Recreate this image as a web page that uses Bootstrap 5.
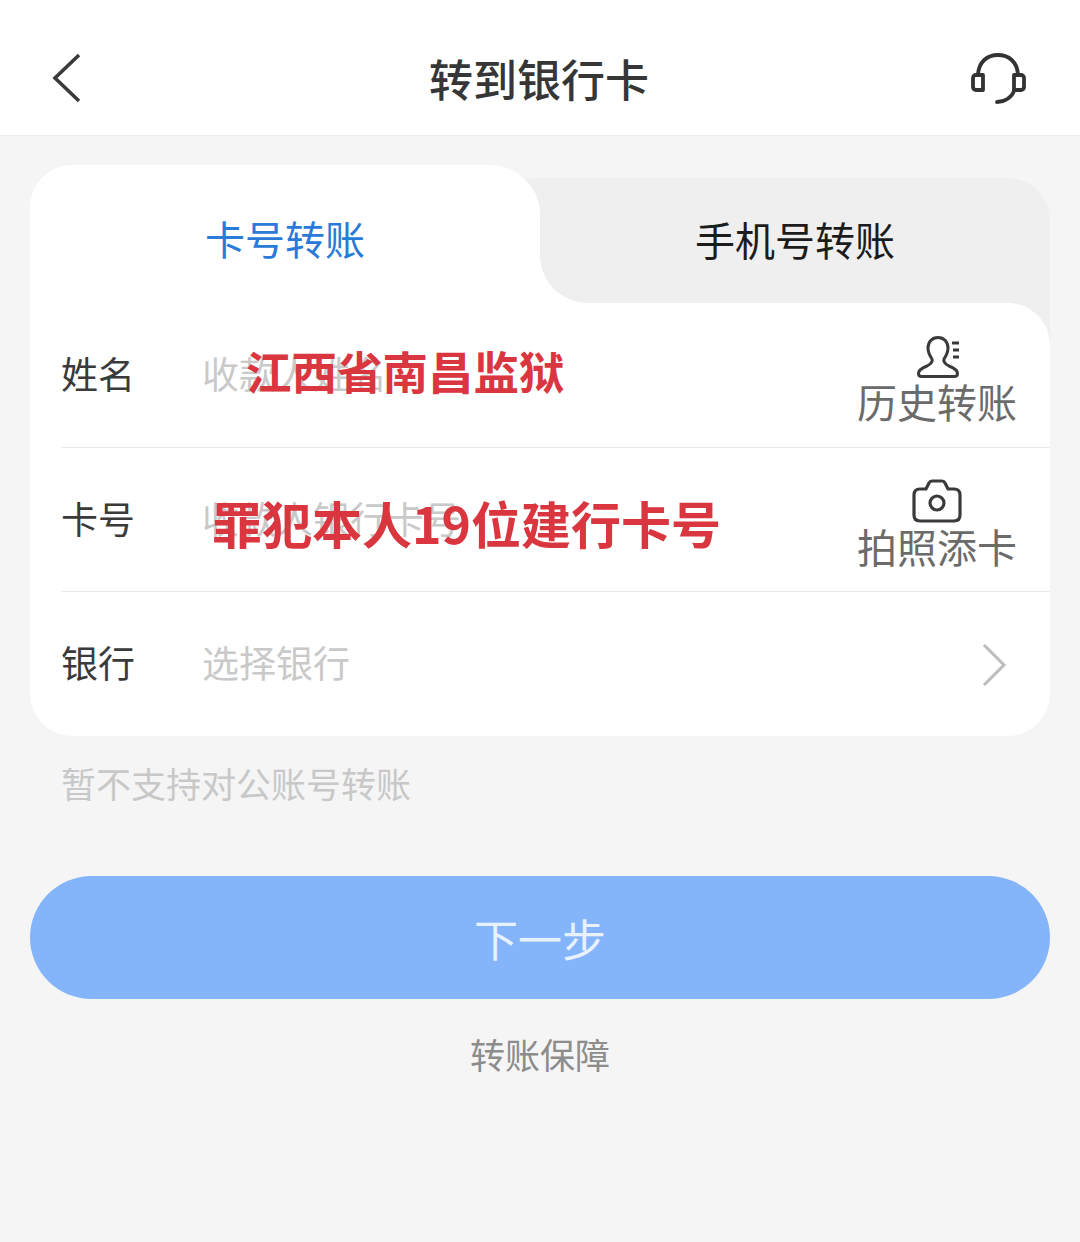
<!DOCTYPE html>
<html lang="zh">
<head>
<meta charset="utf-8">
<title>转到银行卡</title>
<link href="https://cdn.jsdelivr.net/npm/bootstrap@5.3.0/dist/css/bootstrap.min.css" rel="stylesheet">
<style>
html,body{height:100%}
body{background:#f5f5f5;font-family:"Noto Sans CJK SC","Liberation Sans",sans-serif;color:#333;overflow:hidden}
.top-bar{height:136px;background:#fff;border-bottom:1px solid #ececec;padding:20px 54px 0 52px}
.top-side{flex:0 0 120px}
.top-title{flex:1 1 0;text-align:center;font-size:44px;font-weight:500;color:#363636;line-height:1}
.sheet{margin:29px 30px 0}
.tab-row{display:flex;height:138px}
.tab-on{flex:0 0 510px;background:#fff;border-radius:42px 50px 0 0;color:#2a7ad8;font-size:40px;position:relative;z-index:1;padding-top:8px}
.tab-side{flex:1 1 0;margin-top:13px;margin-left:-50px;padding-left:50px;background:linear-gradient(#efefef 50%,#fff 50%) left top/100px 100% no-repeat}
.tab-off-in{height:100%;background:#efefef;border-radius:0 42px 0 48px;color:#1c1c1c;font-size:40px;display:flex;align-items:center;justify-content:center;padding-bottom:4px}
.form-back{background:#efefef;border-radius:0 0 42px 42px}
.form-sheet{background:#fff;border-radius:0 42px 42px 42px;padding-left:31px;height:433px}
.field{height:144px;position:relative}
.field+.field{border-top:1px solid #e9e9e9}
.field-label{flex:0 0 141px;font-size:37px;color:#3a3a3a;line-height:1;margin-bottom:3px}
.field-input{flex:1 1 0;border:0;padding:0;background:transparent;font-size:37px;line-height:1.2;color:#333;border-radius:0;box-shadow:none;margin-bottom:3px}
.field-input::placeholder{color:#c9c9c9;opacity:1}
.stamp{position:absolute;color:#d9363f;font-weight:700;line-height:1;white-space:nowrap}
.stamp-a{left:185px;top:45px;font-size:45.5px}
.stamp-b{left:151px;top:49px;font-size:50px}
.aside-act{flex:0 0 160px;margin-right:33px;text-align:center;color:#6b6b6b;font-size:40px;line-height:1}
.aside-act svg{display:block;margin:0 auto}
.act-one{margin-top:6px}
.act-one svg{transform:translateX(2px)}
.act-two{margin-top:4px}
.act-text{margin-top:2px}
.go-mark{margin:2px 43px 0 0}
.hint{font-size:35px;color:#c8c8c8;line-height:1;margin:29px 0 0 31px}
.next-btn{display:block;width:100%;height:123px;margin-top:76px;border:0;border-radius:62px;background:#84b5fb;color:#e8f1fe;font-size:44px;line-height:1}
.guard{font-size:35px;color:#8c8c8c;line-height:1;margin-top:37px;text-align:center}
</style>
</head>
<body>
<header class="top-bar d-flex align-items-center">
  <div class="top-side"><svg class="d-block" width="30" height="50" viewBox="0 0 30 50" fill="none" stroke="#3a3a3a" stroke-width="3.6"><path d="M27 2 3 25l24 23"/></svg></div>
  <div class="top-title">转到银行卡</div>
  <div class="top-side d-flex justify-content-end"><svg class="d-block" width="58" height="54" viewBox="0 0 58 54" fill="none" stroke="#333" stroke-width="3.8" stroke-linecap="round" stroke-linejoin="round"><path d="M10 23C11 11 19 4 30 4s19 7 20 19"/><path d="M15 24H8a3 3 0 0 0-3 3v9a3 3 0 0 0 3 3h7z"/><path d="M46 24h7a3 3 0 0 1 3 3v9a3 3 0 0 1-3 3h-7z"/><path d="M46 40c-2 6-9 11-17 11"/></svg></div>
</header>
<main class="sheet">
  <div class="tab-row">
    <div class="tab-on d-flex align-items-center justify-content-center"><span>卡号转账</span></div>
    <div class="tab-side"><div class="tab-off-in">手机号转账</div></div>
  </div>
  <div class="form-back">
    <div class="form-sheet">
      <div class="field d-flex align-items-center">
        <div class="field-label">姓名</div>
        <input class="form-control field-input" placeholder="收款人姓名" aria-label="姓名">
        <div class="stamp stamp-a">江西省南昌监狱</div>
        <div class="aside-act act-one">
          <svg width="46" height="44" viewBox="0 0 46 44" fill="none" stroke="#3a3a3a" stroke-width="3"><path d="M22 2.500C16 2.500 12 7 12 13c0 5 2 8 4 11 1 3-1 5-5 7-5 2-8.500 4-8.500 7.500 0 2 1.500 3 3.500 3h32c2 0 3.500-1 3.500-3 0-3.500-3.500-5.500-8.500-7.500-4-2-6-4-5-7 2-3 4-6 4-11 0-6-4-10.500-10-10.500z"/><path d="M36 8h7M37 15h6M37 22h6"/></svg>
          <div class="act-text">历史转账</div>
        </div>
      </div>
      <div class="field d-flex align-items-center">
        <div class="field-label">卡号</div>
        <input class="form-control field-input" placeholder="收款人银行卡号" aria-label="卡号">
        <div class="stamp stamp-b">罪犯本人19位建行卡号</div>
        <div class="aside-act act-two">
          <svg width="54" height="46" viewBox="0 0 54 46" fill="none" stroke="#3a3a3a" stroke-width="3.2"><path d="M10 11h6l3-6c.5-1 1.500-2 3-2h10c1.500 0 2.500 1 3 2l3 6h6c4 0 6 2 6 6v20c0 4-2 6-6 6H10c-4 0-6-2-6-6V17c0-4 2-6 6-6z"/><circle cx="27" cy="25" r="7"/></svg>
          <div class="act-text">拍照添卡</div>
        </div>
      </div>
      <div class="field d-flex align-items-center">
        <div class="field-label">银行</div>
        <input class="form-control field-input" placeholder="选择银行" aria-label="银行">
        <svg class="go-mark" width="26" height="44" viewBox="0 0 26 44" fill="none" stroke="#bdbdbd" stroke-width="3"><path d="m3 2 20 20L3 42"/></svg>
      </div>
    </div>
  </div>
  <div class="hint">暂不支持对公账号转账</div>
  <button type="button" class="btn next-btn">下一步</button>
  <div class="guard">转账保障</div>
</main>
</body>
</html>
